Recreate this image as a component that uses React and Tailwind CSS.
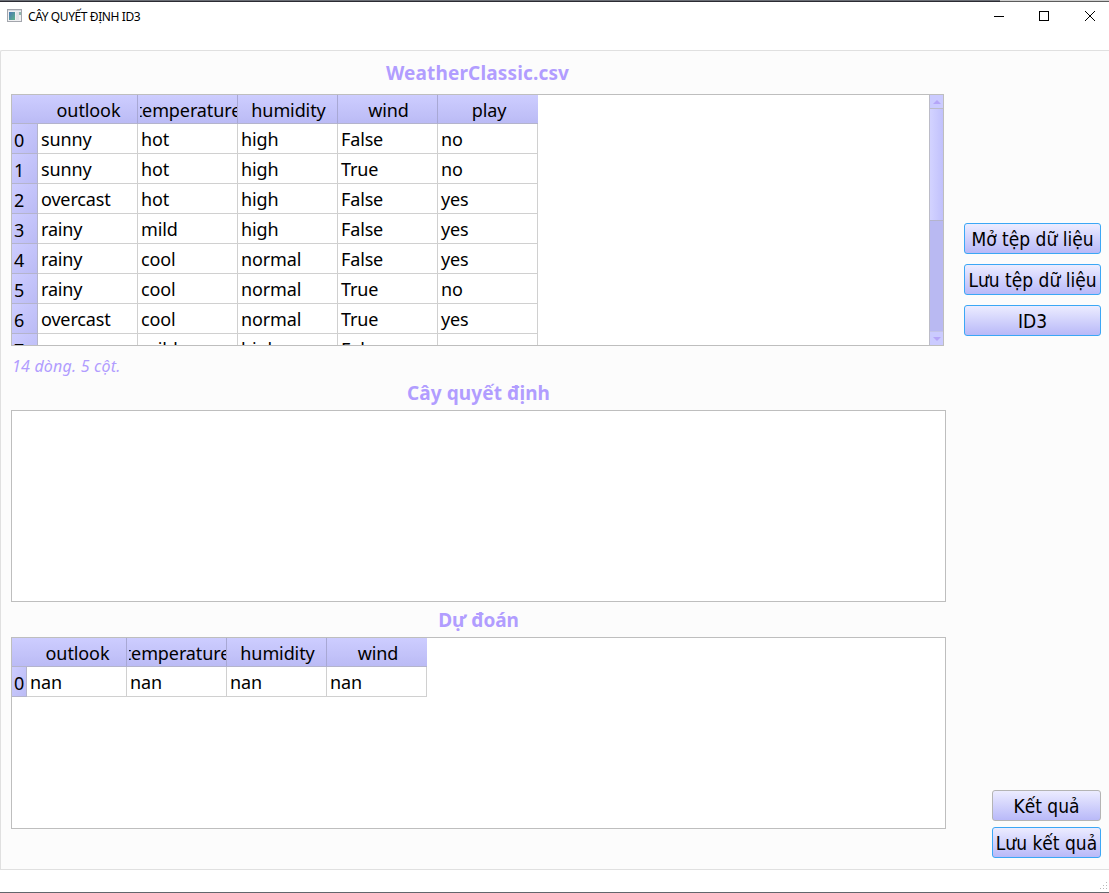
import React from "react";

const weather = [
  ["sunny", "hot", "high", "False", "no"],
  ["sunny", "hot", "high", "True", "no"],
  ["overcast", "hot", "high", "False", "yes"],
  ["rainy", "mild", "high", "False", "yes"],
  ["rainy", "cool", "normal", "False", "yes"],
  ["rainy", "cool", "normal", "True", "no"],
  ["overcast", "cool", "normal", "True", "yes"],
  ["sunny", "mild", "high", "False", "no"],
];

function HeaderCell({ label, last }) {
  return (
    <div
      className={
        "flex h-[29px] w-[100px] shrink-0 items-center justify-center overflow-hidden bg-linear-to-b from-[#cdcdff] to-[#bbbbf5] pl-[2px] border-b border-b-[#b4b4cc] " +
        (last ? "" : "border-r border-r-[#a8a8d4]")
      }
    >
      <div className="flex w-full justify-center overflow-hidden">
        <span className="shrink-0 whitespace-nowrap pt-[3px] text-[18px] leading-[27px] tracking-[-0.1px]">{label}</span>
      </div>
    </div>
  );
}

function Table({ columns, rows, indexWidth }) {
  return (
    <div className="flex flex-col">
      <div className="flex">
        <div className={indexWidth + " h-[29px] shrink-0 border-b border-[#b4b4cc] bg-linear-to-b from-[#cdcdff] to-[#bbbbf5]"} />
        {columns.map((c, i) => (
          <HeaderCell key={c} label={c} last={i === columns.length - 1} />
        ))}
      </div>
      {rows.map((row, r) => (
        <div key={r} className="flex h-[30px] shrink-0">
          <div className={indexWidth + " shrink-0 border-r border-b border-[#b4b4cc] bg-linear-to-br from-[#cdcdff] to-[#bbbbf5] pl-[2px] pt-[3px] text-[18px] leading-[27px]"}>
            {r}
          </div>
          {row.map((v, i) => (
            <div key={i} className="w-[100px] shrink-0 border-r border-b border-[#d0d0d0] bg-white pl-[3px] pt-px text-[18px] leading-[28px] tracking-[-0.15px]">
              {v}
            </div>
          ))}
        </div>
      ))}
    </div>
  );
}

function ScrollBar() {
  return (
    <div className="flex w-[14px] shrink-0 flex-col border-l border-[#bcbcc8] bg-[#b9b9f2]">
      <div className="flex h-[14px] items-center justify-center border-b border-[#bcbcc8] bg-[#cbcbff]">
        <svg width="8" height="4" viewBox="0 0 8 4"><path d="M0 4 4 0 8 4Z" fill="#b5a6f8" /></svg>
      </div>
      <div className="h-[112px] border-b border-[#b4b4cc] bg-linear-to-r from-[#d3d3ff] to-[#c1c1fc]" />
      <div className="flex-1" />
      <div className="flex h-[14px] items-center justify-center border-t border-[#c4c4e8] bg-[#cbcbff]">
        <svg width="8" height="4" viewBox="0 0 8 4"><path d="M0 0 4 4 8 0Z" fill="#b5a6f8" /></svg>
      </div>
    </div>
  );
}

function Button({ children, className }) {
  return (
    <button
      className={
        "flex h-[31px] items-center justify-center whitespace-nowrap rounded-[3px] border bg-linear-to-b from-[#ececff] to-[#b9b9f8] pt-px font-['DejaVu_Sans_Condensed','DejaVu_Sans',sans-serif] text-[19px] leading-[28px] font-stretch-condensed text-black " +
        className
      }
    >
      {children}
    </button>
  );
}

export default function App() {
  return (
    <div className="flex h-[893px] w-[1109px] flex-col overflow-hidden bg-white font-['Noto_Sans',sans-serif] text-black">
      <div className="flex h-[2px] shrink-0">
        <div className="w-[1000px] border-b border-[#2b2b33] bg-[#6b6e75]" />
        <div className="flex-1 border-b border-[#5c5c5c] bg-[#d0d0d0]" />
      </div>
      <header className="flex h-[48px] shrink-0 items-start">
        <svg className="mt-[7px] ml-[7px]" width="16" height="14" viewBox="0 0 16 14">
          <defs>
            <linearGradient id="pane" x1="0" y1="0" x2="1" y2="1">
              <stop offset="0" stopColor="#4a78b4" />
              <stop offset="1" stopColor="#5fb389" />
            </linearGradient>
          </defs>
          <rect x="0.5" y="0.5" width="14" height="12" fill="#f0f0f2" stroke="#a3a6ad" />
          <rect x="1" y="1" width="13" height="1" fill="#d5d8de" />
          <rect x="2" y="3" width="6" height="8" fill="url(#pane)" />
          <rect x="9" y="3" width="3" height="8" fill="#e2e2e5" />
          <rect x="12" y="3" width="2" height="3" fill="#8db6ae" />
        </svg>
        <h1 className="mt-[6px] ml-[5px] whitespace-nowrap text-[12px] leading-[18px] tracking-[-0.4px]">CÂY QUYẾT ĐỊNH ID3</h1>
        <svg className="mt-[8px] ml-auto mr-[13px]" width="102" height="12" viewBox="0 0 102 12" fill="none" stroke="#000" shapeRendering="crispEdges">
          <path d="M0 6.5h10" />
          <path d="M45.5 1.5h9v9h-9z" />
          <path d="m91 1 10 10M101 1 91 11" shapeRendering="auto" />
        </svg>
      </header>
      <main className="flex h-[820px] shrink-0 rounded-tl-[2px] border-y border-l border-[#e0e0e0] bg-[#fcfcfc] pl-[10px] pr-[8px]">
        <section className="flex w-[935px] shrink-0 flex-col">
          <h2 className="flex h-[43px] items-center justify-center pt-[2px] pr-[2px] text-[19px] tracking-[0.15px] font-bold text-[#b19dff]">WeatherClassic.csv</h2>
          <div className="flex h-[252px] w-[933px] shrink-0 border border-[#bebebe] bg-white">
            <div className="flex-1 overflow-hidden">
              <Table columns={["outlook", "temperature", "humidity", "wind", "play"]} rows={weather} indexWidth="w-[26px]" />
            </div>
            <ScrollBar />
          </div>
          <p className="h-[30px] pt-[8px] pl-px text-[16px] leading-[24px] tracking-[0.2px] italic text-[#b19dff]">14 dòng. 5 cột.</p>
          <h2 className="flex h-[34px] items-center justify-center text-[19px] tracking-[0.1px] font-bold text-[#b19dff]">Cây quyết định</h2>
          <div className="h-[192px] shrink-0 border border-[#bebebe] bg-white" />
          <h2 className="flex h-[35px] items-center justify-center pt-[2px] text-[19px] font-bold tracking-[-0.1px] text-[#b19dff]">Dự đoán</h2>
          <div className="h-[192px] shrink-0 border border-[#bebebe] bg-white">
            <Table columns={["outlook", "temperature", "humidity", "wind"]} rows={[["nan", "nan", "nan", "nan"]]} indexWidth="w-[15px]" />
          </div>
        </section>
        <aside className="flex flex-1 flex-col items-end pt-[172px] pb-[11px]">
          <div className="flex w-[137px] flex-col gap-[10px]">
            <Button className="border-[#3ba7f5]">Mở tệp dữ liệu</Button>
            <Button className="border-[#3ba7f5]">Lưu tệp dữ liệu</Button>
            <Button className="border-[#3ba7f5]">ID3</Button>
          </div>
          <div className="mt-auto flex w-[109px] flex-col gap-[6px]">
            <Button className="border-[#b4b4b4]">Kết quả</Button>
            <Button className="border-[#3ba7f5]">Lưu kết quả</Button>
          </div>
        </aside>
      </main>
      <footer className="flex h-[22px] shrink-0 items-end justify-end pb-[2px] pr-px">
        <svg width="8" height="8" viewBox="0 0 8 8" fill="#b8b8b8" shapeRendering="crispEdges">
          <path d="M6 0h1v1H6zM3 3h1v1H3zM6 3h1v1H6zM0 6h1v1H0zM3 6h1v1H3zM6 6h1v1H6z" />
        </svg>
      </footer>
      <div className="h-px shrink-0 bg-[#62666c]" />
    </div>
  );
}
